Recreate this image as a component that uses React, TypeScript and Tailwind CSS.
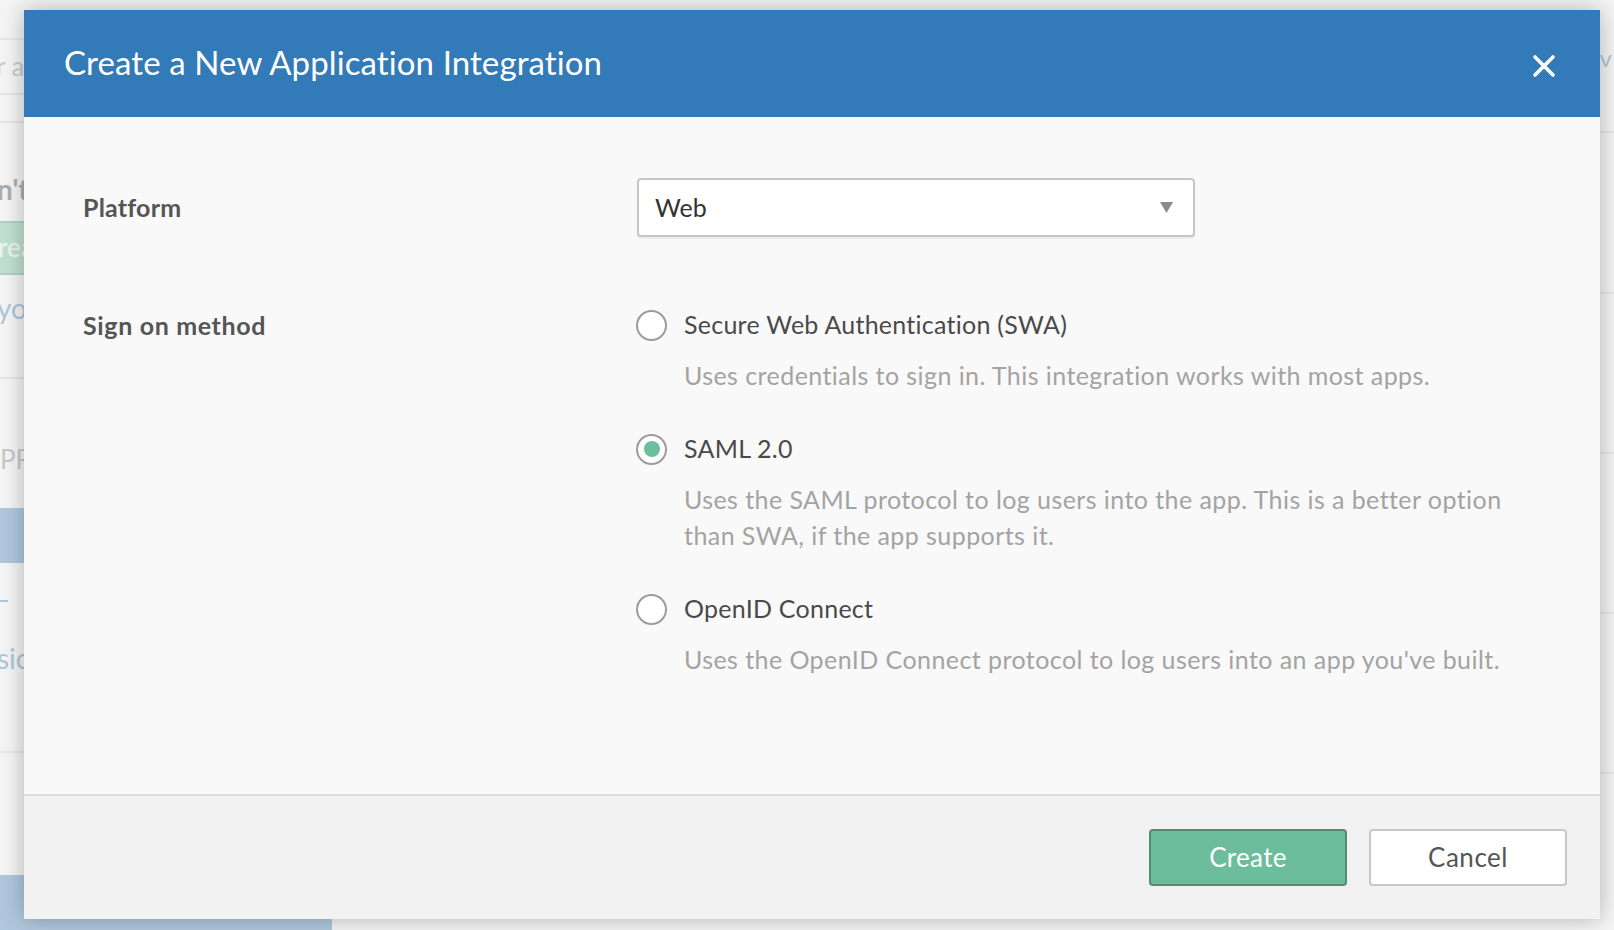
import { useState } from "react";

const font = { fontFamily: "Lato, 'Open Sans', sans-serif" };

type Option = { id: string; label: string; lines: string[] };

const options: Option[] = [
  {
    id: "swa",
    label: "Secure Web Authentication (SWA)",
    lines: ["Uses credentials to sign in. This integration works with most apps."],
  },
  {
    id: "saml",
    label: "SAML 2.0",
    lines: [
      "Uses the SAML protocol to log users into the app. This is a better option",
      "than SWA, if the app supports it.",
    ],
  },
  {
    id: "oidc",
    label: "OpenID Connect",
    lines: ["Uses the OpenID Connect protocol to log users into an app you've built."],
  },
];

function Radio({ checked }: { checked: boolean }) {
  return (
    <span className="flex items-center justify-center size-[31px] shrink-0 rounded-full border-2 border-[#9c9c9c] bg-white">
      {checked && <span className="size-[16px] rounded-full bg-[#6bbf9c]" />}
    </span>
  );
}

function BackgroundPage() {
  return (
    <div className="absolute inset-0 bg-[#f1f1f1] flex">
      <div className="w-[332px] flex flex-col">
        <div className="h-[43px] border-b-2 border-[#dedede]" />
        <div className="h-[60px] border-b-2 border-[#dedede] flex items-center -ml-[4px] text-[26px] text-[#b5b5b5]">
          r apps
        </div>
        <div className="h-[30px] border-b-2 border-[#dedede]" />
        <div className="mt-[45px] -ml-[3px] text-[28px] font-bold text-[#8c8c8c]">n't see</div>
        <div className="mt-[11px] h-[59px] w-[200px] -ml-[10px] rounded border-2 border-[#8fbfaa] bg-[#a6d3bf] flex items-center text-[26px] text-[#e6f2ec] pl-[6px]">
          reate
        </div>
        <div className="mt-[12px] -ml-[3px] text-[28px] text-[#8eaecb]">you</div>
        <div className="mt-[48px] h-[2px] bg-[#dedede]" />
        <div className="mt-[61px] text-[26px] text-[#b0b0b0]">PRO</div>
        <div className="mt-[29px] h-[60px] bg-[#8eb0d0]" />
        <div className="mt-[37px] w-[8px] h-[2px] bg-[#8eaecb]" />
        <div className="mt-[35px] -ml-[3px] text-[28px] text-[#8eaecb]">sion</div>
        <div className="mt-[72px] h-[2px] bg-[#dedede]" />
        <div className="mt-[122px] h-[60px] bg-[#8eb0d0]" />
      </div>
      <div className="flex-1 flex flex-col">
        <div className="h-[133px] border-b-2 border-[#dedede] flex justify-end pr-[2px] pt-[40px] text-[24px] text-[#8eaecb]">
          v
        </div>
        <div className="h-[161px] border-b-2 border-[#dedede]" />
        <div className="h-[160px] border-b-2 border-[#dedede]" />
        <div className="h-[160px] border-b-2 border-[#dedede]" />
        <div className="h-[160px] border-b-2 border-[#dedede]" />
      </div>
      <div className="absolute inset-0 bg-white/30" />
    </div>
  );
}

export default function App() {
  const [method, setMethod] = useState("saml");
  return (
    <div className="relative w-[1614px] h-[930px] overflow-hidden" style={font}>
      <BackgroundPage />
      <div className="absolute left-[24px] top-[10px] w-[1576px] h-[909px] flex flex-col bg-[#f9f9f9] shadow-[0_0_22px_rgba(0,0,0,0.28)]">
        <div className="h-[107px] shrink-0 bg-[#337ab9] flex items-center justify-between pl-[40px] pr-[44px]">
          <h2 className="text-[33px] text-white font-normal tracking-[0.1px] -mt-[1px]">
            Create a New Application Integration
          </h2>
          <button className="size-[24px] flex items-center justify-center mt-[4px]">
            <svg width="24" height="24" viewBox="0 0 24 24">
              <path d="M3 3 L21 21 M21 3 L3 21" stroke="#fff" strokeWidth="3.6" strokeLinecap="round" />
            </svg>
          </button>
        </div>

        <div className="flex-1 flex flex-col pl-[59px] pt-[61px]">
          <div className="flex items-center">
            <div className="w-[554px] text-[25px] tracking-[0.2px] font-bold text-[#555]">Platform</div>
            <div className="w-[558px] h-[59px] rounded-[4px] border-2 border-[#c6c6c6] bg-white shadow-[0_2px_2px_rgba(0,0,0,0.06)] flex items-center justify-between pl-[16px] pr-[20px]">
              <span className="text-[25px] text-[#333]">Web</span>
              <svg width="13" height="11" viewBox="0 0 13 11">
                <polygon points="0,0 13,0 6.5,11" fill="#8a8a8a" />
              </svg>
            </div>
          </div>

          <div className="flex mt-[70px]">
            <div className="w-[554px] text-[25px] tracking-[0.65px] leading-[36px] font-bold text-[#555]">
              Sign on method
            </div>
            <div className="flex flex-col gap-[38px] -ml-[1px]">
              {options.map((o) => (
                <div key={o.id} className="flex flex-col cursor-pointer" onClick={() => setMethod(o.id)}>
                  <div className="flex items-center gap-[17px] h-[36px]">
                    <Radio checked={method === o.id} />
                    <span className="text-[25px] tracking-[0.25px] text-[#4a4a4a]">{o.label}</span>
                  </div>
                  <div className="mt-[14px] pl-[48px] text-[25px] tracking-[0.43px] leading-[36px] text-[#a3a3a3]">
                    {o.lines.map((l) => (
                      <div key={l}>{l}</div>
                    ))}
                  </div>
                </div>
              ))}
            </div>
          </div>
        </div>

        <div className="h-[125px] shrink-0 border-t-2 border-[#dcdcdc] bg-[#f2f2f2] flex items-center justify-end gap-[22px] pr-[33px]">
          <button className="w-[198px] h-[57px] rounded-[4px] border-2 border-[#4f8e73] bg-[#6bbd9b] text-[26px] tracking-[0.3px] text-white">
            Create
          </button>
          <button className="w-[198px] h-[57px] rounded-[4px] border-2 border-[#c8c8c8] bg-white text-[26px] tracking-[0.5px] text-[#555]">
            Cancel
          </button>
        </div>
      </div>
    </div>
  );
}
